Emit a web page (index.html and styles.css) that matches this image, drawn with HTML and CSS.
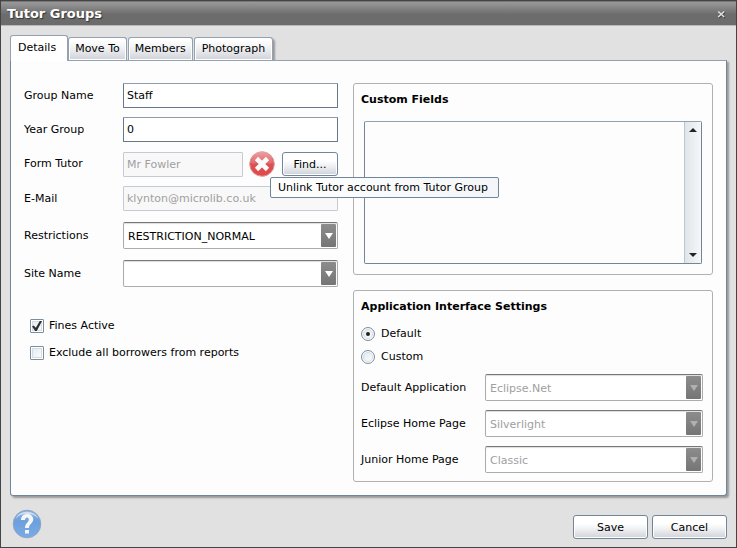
FILE: index.html
```html
<!DOCTYPE html>
<html lang="en">

<head>
  <meta charset="UTF-8">
  <meta name="viewport" content="width=device-width, initial-scale=1.0">
  <title>Tutor Groups</title>

  <link rel="stylesheet" href="styles.css">
</head>

<body>
<div class="window">
  <header class="titleBar">
    <h1>Tutor Groups</h1>
    <button class="close" type="button" aria-label="Close">
      <svg width="9" height="9" viewBox="0 0 9 9">
        <path d="M2 2.5l6 5.5M8 2.5L2 8" stroke="#444" stroke-width="1.6"/>
        <path d="M1.2 1.5l6 5.5M7.2 1.5l-6 5.5" stroke="#e4e4e4" stroke-width="1.4"/>
      </svg>
    </button>
  </header>

  <nav class="tabs">
    <button class="tab active" type="button">Details</button>
    <button class="tab" type="button">Move To</button>
    <button class="tab" type="button">Members</button>
    <button class="tab" type="button">Photograph</button>
  </nav>

  <main class="panel">
    <form class="details">
      <div class="row">
        <label for="groupName">Group Name</label>
        <input id="groupName" class="field" type="text" value="Staff">
      </div>
      <div class="row">
        <label for="yearGroup">Year Group</label>
        <input id="yearGroup" class="field" type="text" value="0">
      </div>
      <div class="row">
        <label for="formTutor">Form Tutor</label>
        <div class="tutor">
          <input id="formTutor" class="field" type="text" value="Mr Fowler" disabled>
          <div class="unlinkWrap">
            <button class="unlink" type="button" aria-label="Unlink" aria-describedby="unlinkTip">
              <svg width="26" height="26" viewBox="0 0 26 26">
                <defs>
                  <linearGradient id="red" x1="0" y1="0" x2="0" y2="1">
                    <stop offset="0" stop-color="#ee8c8c"/>
                    <stop offset=".45" stop-color="#dc5053"/>
                    <stop offset="1" stop-color="#e3484a"/>
                  </linearGradient>
                </defs>
                <circle cx="13" cy="13" r="12.3" fill="url(#red)" stroke="#dc9a9a" stroke-width="1"/>
                <path d="M2 12a11 11 0 0 1 22 0c-5 2-7-1-11-1s-7 3-11 1z" fill="#fff" opacity=".16"/>
                <path d="M7.500 7.500l11 11M18.500 7.500l-11 11" stroke="#fafafa" stroke-width="4.600"/>
              </svg>
            </button>
            <span id="unlinkTip" class="tooltip" role="tooltip">Unlink Tutor account from Tutor Group</span>
          </div>
          <button class="btn find" type="button">Find...</button>
        </div>
      </div>
      <div class="row">
        <label for="email">E-Mail</label>
        <input id="email" class="field" type="text" value="klynton@microlib.co.uk" disabled>
      </div>
      <div class="row comboRow">
        <label for="restrictions">Restrictions</label>
        <div class="combo">
          <select id="restrictions"><option>RESTRICTION_NORMAL</option></select>
        </div>
      </div>
      <div class="row comboRow">
        <label for="siteName">Site Name</label>
        <div class="combo">
          <select id="siteName"><option></option></select>
        </div>
      </div>

      <div class="checks">
        <label class="check"><input type="checkbox" checked>Fines Active</label>
        <label class="check"><input type="checkbox">Exclude all borrowers from reports</label>
      </div>
    </form>

    <div class="side">
      <section class="group customFields">
        <h2>Custom Fields</h2>
        <div class="list">
          <div class="scrollbar">
            <button class="up" type="button" aria-label="Scroll up"></button>
            <button class="down" type="button" aria-label="Scroll down"></button>
          </div>
        </div>
      </section>

      <section class="group settings">
        <h2>Application Interface Settings</h2>
        <label class="check radio"><input type="radio" name="mode" checked>Default</label>
        <label class="check radio"><input type="radio" name="mode">Custom</label>
        <div class="settingRows">
          <div class="row">
            <label for="defaultApp">Default Application</label>
            <div class="combo disabled">
              <select id="defaultApp" disabled><option>Eclipse.Net</option></select>
            </div>
          </div>
          <div class="row">
            <label for="eclipseHome">Eclipse Home Page</label>
            <div class="combo disabled">
              <select id="eclipseHome" disabled><option>Silverlight</option></select>
            </div>
          </div>
          <div class="row">
            <label for="juniorHome">Junior Home Page</label>
            <div class="combo disabled">
              <select id="juniorHome" disabled><option>Classic</option></select>
            </div>
          </div>
        </div>
      </section>
    </div>
  </main>

  <footer class="footer">
    <button class="help" type="button" aria-label="Help">
      <svg width="30" height="30" viewBox="0 0 30 30">
        <defs>
          <linearGradient id="blue" x1="0" y1="0" x2="0" y2="1">
            <stop offset="0" stop-color="#8fb5e4"/>
            <stop offset=".4" stop-color="#6c9fdd"/>
            <stop offset="1" stop-color="#7aabe6"/>
          </linearGradient>
        </defs>
        <circle cx="15" cy="15" r="13.800" fill="url(#blue)" stroke="#8fa5c0" stroke-width="1"/>
        <path d="M3.500 10a12 10 0 0 1 23 0c-3-4-7-5-11.500-5s-8.500 1-11.500 5z" fill="#fff" opacity=".6"/>
        <path d="M9 11c0-3.900 2.500-6 6.200-6 3.600 0 6 2 6 5.200 0 4.200-4.200 4.600-4.200 8.800h-4c0-5.200 3.800-5.600 3.800-8.600 0-1.300-.7-2-1.800-2-1.300 0-1.900.9-1.900 2.600z" fill="#f6f6f6"/>
        <path d="M13 21h4v3.500h-4z" fill="#f6f6f6"/>
      </svg>
    </button>
    <div class="actions">
      <button class="btn" type="button">Save</button>
      <button class="btn" type="button">Cancel</button>
    </div>
  </footer>
</div>
</body>

</html>
```
FILE: styles.css
```css
html {
  --font: Verdana, 'DejaVu Sans', sans-serif;
  --face: #e1e1e1;
  --gray: #ababab;
  --muted: #a0a0a0;
}

* {
  box-sizing: border-box;
}

body {
  margin: 0;
  font-family: var(--font);
  font-size: 11px;
  line-height: 14px;
  color: #000;
}

h1,
h2 {
  margin: 0;
}

button,
input,
select {
  font: inherit;
  color: inherit;
  margin: 0;
}

button {
  border: none;
  padding: 0;
  background: none;
}

svg {
  display: block;
}

.window {
  display: flex;
  flex-direction: column;
  min-height: 100vh;
  border: 1px solid #444;
  background: var(--face);
}

.titleBar {
  display: flex;
  align-items: center;
  justify-content: space-between;
  height: 25px;
  padding: 1px 10px 0 6px;
  border-top: 1px solid #777;
  border-bottom: 1px solid #b8b8b8;
  background: linear-gradient(#999, #6c6c6c 55%, #6c6c6c);
}

.titleBar h1 {
  color: #fff;
  font-size: 13px;
  line-height: 16px;
  text-shadow: 1px 1px 1px #333;
}

/* tabs */
.tabs {
  display: flex;
  align-items: flex-end;
  height: 34px;
  padding-left: 9px;
}

.tab {
  height: 23px;
  padding: 0 6px;
  margin-right: 1px;
  border: 1px solid #93a1b0;
  border-bottom: none;
  border-radius: 3px 3px 0 0;
  background: linear-gradient(#fff 10%, #f0f1f3 45%, #cfd2d8);
  box-shadow: inset 0 0 0 1px #fff;
}

.tab.active {
  position: relative;
  height: 26px;
  margin: 0 0 -1px;
  padding: 0 11px 2px 7px;
  background: #fff;
}

.tab:last-child {
  margin-right: 0;
  padding: 0 7px;
  box-shadow: inset 0 0 0 1px #fff, 2px 2px 2px #999;
}

.panel {
  flex: 1;
  display: grid;
  grid-template-columns: 314px 1fr;
  gap: 15px;
  margin: 0 9px;
  padding: 22px 13px 13px;
  border: 1px solid #71869a;
  border-top-color: #93a1b0;
  border-radius: 0 0 3px 3px;
  background: #fdfdfd;
  box-shadow: 2px 2px 2px #999;
}

/* form rows */
.details {
  display: flex;
  flex-direction: column;
  gap: 9px;
}

.row {
  display: grid;
  grid-template-columns: 99px 1fr;
  align-items: center;
}

.comboRow {
  margin-top: 2px;
}

.field {
  width: 100%;
  min-width: 0;
  height: 25px;
  padding: 0 3px;
  border: 1px solid #66788a;
  border-top-color: #8e9cab;
  border-radius: 1px;
  background: #fff;
}

.field:disabled {
  border-color: #c5cbd2;
  background: #f8f8f9;
  color: var(--muted);
}

.tutor {
  display: flex;
  align-items: center;
}

.tutor .field {
  flex: 1;
}

.unlinkWrap {
  position: relative;
  display: flex;
  margin: 0 7px 0 6px;
}

.tooltip {
  position: absolute;
  top: 26px;
  left: 21px;
  z-index: 1;
  padding: 3px 10px 2px 7px;
  border: 1px solid #71869a;
  border-radius: 2px;
  background: linear-gradient(90deg, #fff, #f3f5f8);
  white-space: nowrap;
}

.btn {
  width: 75px;
  height: 24px;
  padding-top: 1px;
  border: 1px solid #71869a;
  border-radius: 3px;
  background: linear-gradient(#fff 35%, #eef0f2 60%, #cfd2d8);
  box-shadow: inset 0 0 0 1px #fff;
}

.find {
  width: 56px;
}

.combo {
  position: relative;
  height: 27px;
}

.combo select {
  display: block;
  width: 100%;
  height: 100%;
  padding: 2px 20px 0 4px;
  border: 1px solid var(--gray);
  border-top-color: #777;
  border-radius: 2px;
  background: #fff;
  box-shadow: inset 0 1px 1px #ddd;
  appearance: none;
}

.combo select:disabled {
  color: var(--muted);
  opacity: 1;
}

.combo::before {
  content: "";
  position: absolute;
  top: 2px;
  right: 2px;
  bottom: 2px;
  width: 15px;
  border-radius: 1px;
  background: linear-gradient(#8c8c8c, #757575);
  pointer-events: none;
}

.combo::after {
  content: "";
  position: absolute;
  top: 11px;
  right: 5px;
  border: 4px solid transparent;
  border-top: 6px solid #fff;
  border-bottom: none;
  pointer-events: none;
}

.combo.disabled::after {
  border-top-color: #b0b0b0;
}

/* tick boxes and radios */
.checks {
  display: flex;
  flex-direction: column;
  gap: 13px;
  margin-top: 23px;
  padding-left: 6px;
}

.check {
  display: flex;
  align-items: center;
  gap: 5px;
}

.check input {
  display: grid;
  place-items: center;
  width: 14px;
  height: 14px;
  border: 1px solid #7c8d9d;
  border-radius: 1px;
  background: linear-gradient(135deg, #e0e8ef, #fff);
  box-shadow: inset 0 0 0 1px #fff, inset 0 0 0 2px #d5dce3;
  appearance: none;
}

.check input[type="checkbox"]:checked::before {
  content: "";
  width: 10px;
  height: 10px;
  background: #2e2e2e;
  clip-path: polygon(0 55%, 18% 45%, 38% 68%, 78% 0, 100% 0, 48% 100%, 32% 100%);
}

.check.radio {
  gap: 6px;
  margin-top: 9px;
}

.check.radio input {
  border-radius: 50%;
}

.radio input:checked::before {
  content: "";
  width: 4px;
  height: 4px;
  border-radius: 50%;
  background: #222;
}

/* right side */
.side {
  display: flex;
  flex-direction: column;
  gap: 15px;
}

.group {
  display: flex;
  flex-direction: column;
  padding: 9px 9px 8px 7px;
  border: 1px solid #b0b0b0;
  border-radius: 3px;
}

.group h2 {
  font-size: 11px;
  line-height: 14px;
}

.customFields {
  flex: 1;
  padding: 9px 10px 10px;
}

.customFields h2 {
  margin: 0 0 14px -3px;
}

.list {
  flex: 1;
  display: flex;
  justify-content: flex-end;
  min-height: 100px;
  border: 1px solid #71869a;
  border-top-color: #93a1b0;
  border-radius: 2px;
}

.scrollbar {
  display: flex;
  flex-direction: column;
  justify-content: space-between;
  width: 17px;
  border-left: 1px solid #bcc6ce;
  background: linear-gradient(90deg, #dfe5e9, #f5f8fa);
}

.scrollbar button {
  height: 16px;
  display: grid;
  place-items: center;
}

.up::before,
.down::before {
  content: "";
  border: 4px solid transparent;
  border-bottom: 4px solid #222;
  border-top: none;
}

.down::before {
  border-top: 4px solid #222;
  border-bottom: none;
}

.settings h2 {
  margin-bottom: 4px;
}

.settingRows {
  display: flex;
  flex-direction: column;
  gap: 9px;
  margin-top: 10px;
}

.settings .row {
  grid-template-columns: 124px 1fr;
}

.footer {
  display: flex;
  align-items: center;
  justify-content: space-between;
  padding: 12px 9px 8px 11px;
}

.actions {
  display: flex;
  gap: 4px;
  padding-top: 7px;
}
```
